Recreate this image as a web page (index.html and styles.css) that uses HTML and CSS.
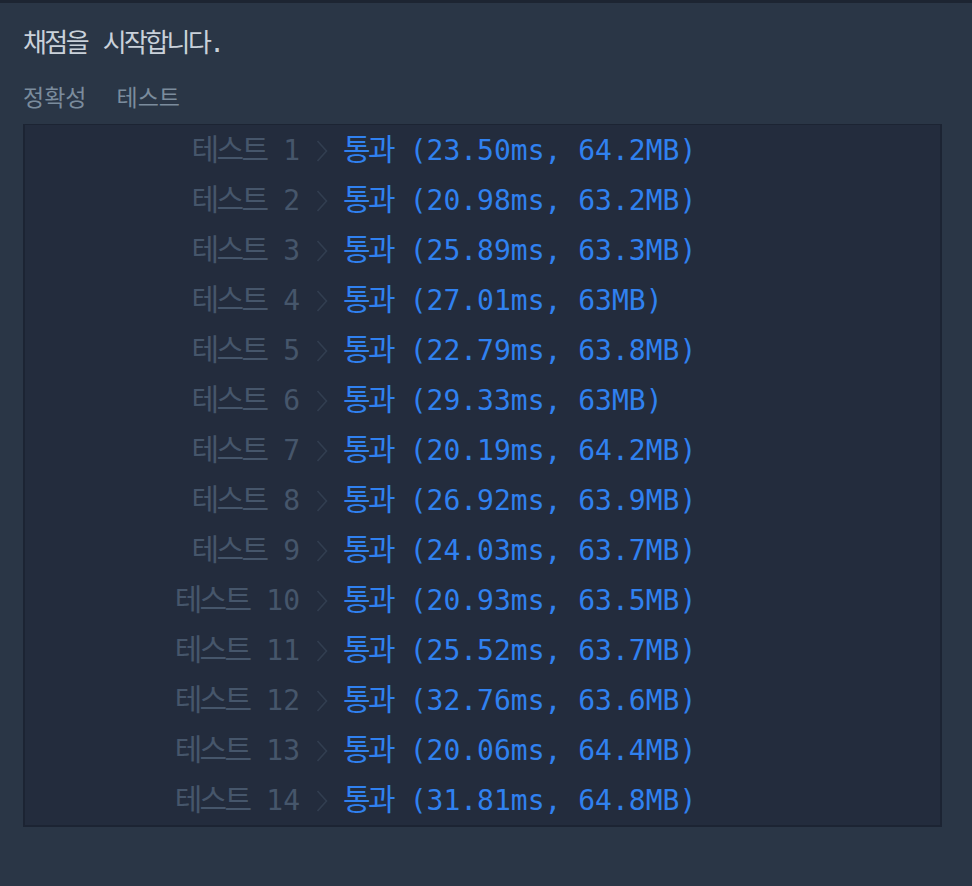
FILE: index.html
```html
<!DOCTYPE html>
<html lang="ko">
<head>
<meta charset="utf-8">
<title>채점 결과</title>
<link rel="stylesheet" href="styles.css">
</head>
<body>
<div class="top-rule"></div>
<main class="console">
  <p class="msg"><span class="ko">채점을</span> <span class="ko">시작합니다</span>.</p>
  <div class="section-title"><span>정확성</span><span>테스트</span></div>
  <div class="results">
    <div class="row"><span class="label"><span class="ko">테스트</span> 1</span><span class="chev"><svg viewBox="0 0 12 22" width="12" height="22"><path d="M1.5 1 L10.5 11 L1.5 21"/></svg></span><span class="pass"><span class="ko">통과</span> (23.50ms, 64.2MB)</span></div>
    <div class="row"><span class="label"><span class="ko">테스트</span> 2</span><span class="chev"><svg viewBox="0 0 12 22" width="12" height="22"><path d="M1.5 1 L10.5 11 L1.5 21"/></svg></span><span class="pass"><span class="ko">통과</span> (20.98ms, 63.2MB)</span></div>
    <div class="row"><span class="label"><span class="ko">테스트</span> 3</span><span class="chev"><svg viewBox="0 0 12 22" width="12" height="22"><path d="M1.5 1 L10.5 11 L1.5 21"/></svg></span><span class="pass"><span class="ko">통과</span> (25.89ms, 63.3MB)</span></div>
    <div class="row"><span class="label"><span class="ko">테스트</span> 4</span><span class="chev"><svg viewBox="0 0 12 22" width="12" height="22"><path d="M1.5 1 L10.5 11 L1.5 21"/></svg></span><span class="pass"><span class="ko">통과</span> (27.01ms, 63MB)</span></div>
    <div class="row"><span class="label"><span class="ko">테스트</span> 5</span><span class="chev"><svg viewBox="0 0 12 22" width="12" height="22"><path d="M1.5 1 L10.5 11 L1.5 21"/></svg></span><span class="pass"><span class="ko">통과</span> (22.79ms, 63.8MB)</span></div>
    <div class="row"><span class="label"><span class="ko">테스트</span> 6</span><span class="chev"><svg viewBox="0 0 12 22" width="12" height="22"><path d="M1.5 1 L10.5 11 L1.5 21"/></svg></span><span class="pass"><span class="ko">통과</span> (29.33ms, 63MB)</span></div>
    <div class="row"><span class="label"><span class="ko">테스트</span> 7</span><span class="chev"><svg viewBox="0 0 12 22" width="12" height="22"><path d="M1.5 1 L10.5 11 L1.5 21"/></svg></span><span class="pass"><span class="ko">통과</span> (20.19ms, 64.2MB)</span></div>
    <div class="row"><span class="label"><span class="ko">테스트</span> 8</span><span class="chev"><svg viewBox="0 0 12 22" width="12" height="22"><path d="M1.5 1 L10.5 11 L1.5 21"/></svg></span><span class="pass"><span class="ko">통과</span> (26.92ms, 63.9MB)</span></div>
    <div class="row"><span class="label"><span class="ko">테스트</span> 9</span><span class="chev"><svg viewBox="0 0 12 22" width="12" height="22"><path d="M1.5 1 L10.5 11 L1.5 21"/></svg></span><span class="pass"><span class="ko">통과</span> (24.03ms, 63.7MB)</span></div>
    <div class="row"><span class="label"><span class="ko">테스트</span> 10</span><span class="chev"><svg viewBox="0 0 12 22" width="12" height="22"><path d="M1.5 1 L10.5 11 L1.5 21"/></svg></span><span class="pass"><span class="ko">통과</span> (20.93ms, 63.5MB)</span></div>
    <div class="row"><span class="label"><span class="ko">테스트</span> 11</span><span class="chev"><svg viewBox="0 0 12 22" width="12" height="22"><path d="M1.5 1 L10.5 11 L1.5 21"/></svg></span><span class="pass"><span class="ko">통과</span> (25.52ms, 63.7MB)</span></div>
    <div class="row"><span class="label"><span class="ko">테스트</span> 12</span><span class="chev"><svg viewBox="0 0 12 22" width="12" height="22"><path d="M1.5 1 L10.5 11 L1.5 21"/></svg></span><span class="pass"><span class="ko">통과</span> (32.76ms, 63.6MB)</span></div>
    <div class="row"><span class="label"><span class="ko">테스트</span> 13</span><span class="chev"><svg viewBox="0 0 12 22" width="12" height="22"><path d="M1.5 1 L10.5 11 L1.5 21"/></svg></span><span class="pass"><span class="ko">통과</span> (20.06ms, 64.4MB)</span></div>
    <div class="row"><span class="label"><span class="ko">테스트</span> 14</span><span class="chev"><svg viewBox="0 0 12 22" width="12" height="22"><path d="M1.5 1 L10.5 11 L1.5 21"/></svg></span><span class="pass"><span class="ko">통과</span> (31.81ms, 64.8MB)</span></div>
  </div>
</main>
</body>
</html>
```

FILE: styles.css
```css
html, body {
  margin: 0;
  padding: 0;
  background: #2a3646;
  height: 100%;
}

body {
  font-family: "DejaVu Sans Mono", "Noto Sans CJK KR", monospace;
  color: #c8d0d9;
}

.top-rule {
  height: 3px;
  background: #1d2532;
}

.console {
  padding: 25px 0 0 23px;
}

.msg {
  margin: 0;
  font-size: 26px;
  line-height: 30px;
  color: #c9d1da;
}

.msg .ko {
  font-size: 26px;
  letter-spacing: -2.6px;
}

.section-title {
  margin-top: 23px;
  display: flex;
  gap: 30px;
  font-family: "Noto Sans CJK KR", sans-serif;
  font-size: 23px;
  line-height: 30px;
  color: #7b8c9d;
}

.results {
  margin-top: 13px;
  width: 915px;
  background: #232c3d;
  border: 2px solid #1c2433;
  border-top-width: 1px;
}

.row {
  display: grid;
  grid-template-columns: 275px 43px 1fr;
  align-items: center;
  height: 50px;
  font-size: 28px;
  line-height: 50px;
  white-space: pre;
}

.ko {
  font-size: 30px;
  letter-spacing: -2.7px;
}

.label {
  text-align: right;
  color: #46566b;
}

.chev {
  display: flex;
  justify-content: center;
  align-items: center;
  padding-left: 1px;
}

.chev svg {
  display: block;
}

.chev path {
  fill: none;
  stroke: #323e50;
  stroke-width: 1.6;
}

.pass {
  color: #3081f0;
}
```
